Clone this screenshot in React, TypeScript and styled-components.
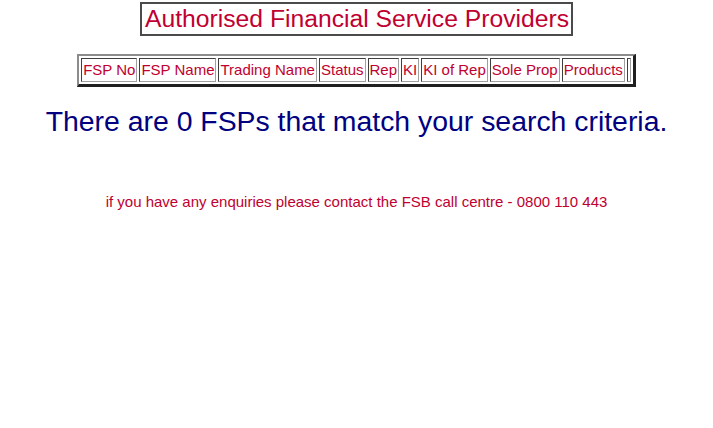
import React from 'react';
import styled, { createGlobalStyle } from 'styled-components';

const GlobalStyle = createGlobalStyle`
  body {
    margin: 0;
    background: #fff;
    font-family: "Liberation Sans", Arial, sans-serif;
  }
`;

const Page = styled.div`
  display: flex;
  flex-direction: column;
  align-items: center;
  padding-top: 2px;
`;

const TitleBox = styled.div`
  border: 2px solid #4a4a4a;
  padding: 1px 2px 1px 3px;
  font-size: 24.7px;
  line-height: 28px;
  color: #c00030;
`;

const HeaderTable = styled.table`
  margin-top: 18px;
  border-collapse: separate;
  border-spacing: 2px;
  border-style: solid;
  border-width: 2px 3px 3px 2px;
  border-color: #8c8c8c #202020 #202020 #8c8c8c;
`;

const HeadCell = styled.td<{ $empty?: boolean }>`
  border-style: solid;
  border-width: 1px;
  border-color: #404040 #a0a0a0 #a0a0a0 #404040;
  padding: 1px;
  font-size: 15px;
  line-height: 20px;
  color: #c00030;
  width: ${(p) => (p.$empty ? '0' : 'auto')};
  white-space: nowrap;
`;

const Notice = styled.div`
  margin-top: 18px;
  font-size: 28.4px;
  line-height: 32px;
  color: #000080;
`;

const Enquiry = styled.div`
  margin-top: 56px;
  font-size: 15px;
  line-height: 18px;
  color: #c00030;
`;

const columns = ['FSP No', 'FSP Name', 'Trading Name', 'Status', 'Rep', 'KI', 'KI of Rep', 'Sole Prop', 'Products'];

export default function App() {
  return (
    <>
      <GlobalStyle />
      <Page>
        <TitleBox>Authorised Financial Service Providers</TitleBox>
        <HeaderTable>
          <tbody>
            <tr>
              {columns.map((c) => (
                <HeadCell key={c}>{c}</HeadCell>
              ))}
              <HeadCell $empty />
            </tr>
          </tbody>
        </HeaderTable>
        <Notice>There are 0 FSPs that match your search criteria.</Notice>
        <Enquiry>if you have any enquiries please contact the FSB call centre - 0800 110 443</Enquiry>
      </Page>
    </>
  );
}
